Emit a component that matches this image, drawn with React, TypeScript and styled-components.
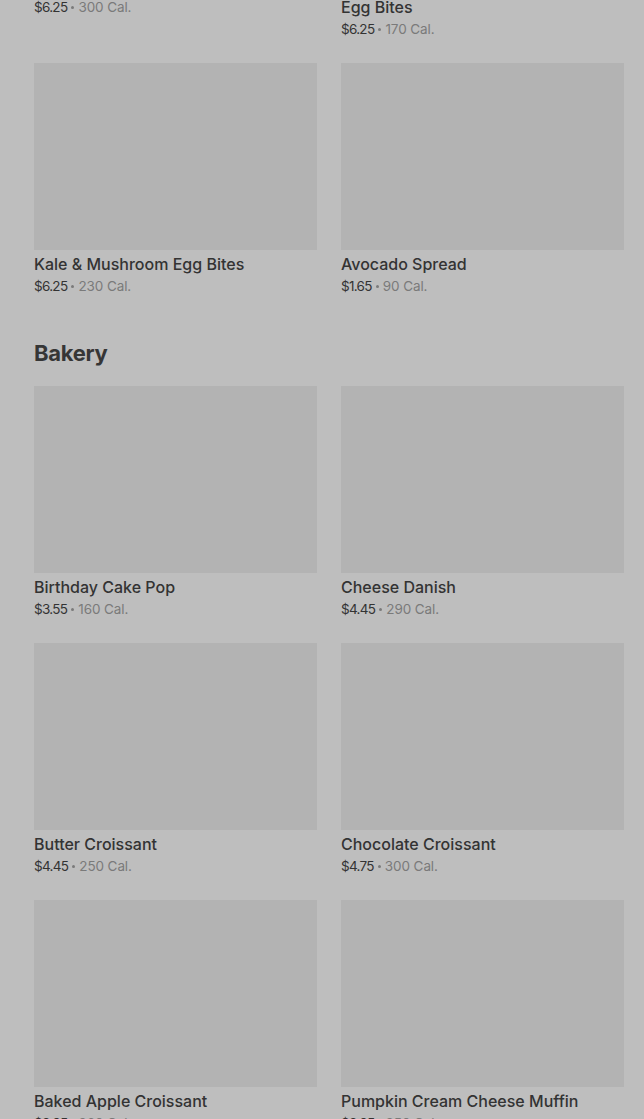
import React from "react";
import styled, { createGlobalStyle } from "styled-components";

const Global = createGlobalStyle`
  html, body { margin: 0; padding: 0; background: #bebebe; }
  body { font-family: Inter, "Noto Sans", Roboto, sans-serif; overflow: hidden; }
`;

const Page = styled.div`
  width: 644px;
  height: 1119px;
  overflow: hidden;
  background: #bebebe;
`;

const Content = styled.div`
  margin-top: -216px;
  padding: 0 20px 0 34px;
`;

const Section = styled.section<{ $first?: boolean }>`
  padding-top: ${(p) => (p.$first ? 0 : 41)}px;
`;

const Heading = styled.h2`
  margin: 0 0 17px;
  font-size: 22px;
  line-height: 32px;
  font-weight: 700;
  color: #363636;
  letter-spacing: -0.3px;
`;

const Grid = styled.div`
  display: grid;
  grid-template-columns: 283px 283px;
  column-gap: 24px;
  row-gap: 24px;
  align-items: start;
`;

const Card = styled.div`
  display: flex;
  flex-direction: column;
`;

const Thumb = styled.div`
  height: 187px;
  background: #b3b3b3;
`;

const Title = styled.div`
  margin-top: 3px;
  font-size: 16px;
  line-height: 22px;
  font-weight: 500;
  color: #333333;
`;

const Meta = styled.div`
  margin-top: 2px;
  display: flex;
  align-items: center;
  font-size: 13.5px;
  line-height: 19px;
  color: #333333;
`;

const Price = styled.span`
  letter-spacing: -0.7px;
`;

const Dot = styled.span`
  width: 3px;
  height: 3px;
  border-radius: 50%;
  background: #7a7a7a;
  margin: 0 4px 0 4px;
`;

const Cal = styled.span`
  color: #7a7a7a;
  letter-spacing: -0.1px;
`;

type Item = { name: string; price: string; cal: string };

const breakfast: Item[] = [
  { name: "Bacon & Gruyère Egg Bites", price: "$6.25", cal: "300" },
  { name: "Egg White & Roasted Red Pepper Egg Bites", price: "$6.25", cal: "170" },
  { name: "Kale & Mushroom Egg Bites", price: "$6.25", cal: "230" },
  { name: "Avocado Spread", price: "$1.65", cal: "90" },
];

const bakery: Item[] = [
  { name: "Birthday Cake Pop", price: "$3.55", cal: "160" },
  { name: "Cheese Danish", price: "$4.45", cal: "290" },
  { name: "Butter Croissant", price: "$4.45", cal: "250" },
  { name: "Chocolate Croissant", price: "$4.75", cal: "300" },
  { name: "Baked Apple Croissant", price: "$3.95", cal: "260" },
  { name: "Pumpkin Cream Cheese Muffin", price: "$3.95", cal: "350" },
];

function ItemCard({ item }: { item: Item }) {
  return (
    <Card>
      <Thumb />
      <Title>{item.name}</Title>
      <Meta>
        <Price>{item.price}</Price>
        <Dot />
        <Cal>{item.cal} Cal.</Cal>
      </Meta>
    </Card>
  );
}

export default function App() {
  return (
    <Page>
      <Global />
      <Content>
        <Section $first>
          <Grid>
            {breakfast.map((it) => (
              <ItemCard key={it.name} item={it} />
            ))}
          </Grid>
        </Section>
        <Section>
          <Heading>Bakery</Heading>
          <Grid>
            {bakery.map((it) => (
              <ItemCard key={it.name} item={it} />
            ))}
          </Grid>
        </Section>
      </Content>
    </Page>
  );
}
